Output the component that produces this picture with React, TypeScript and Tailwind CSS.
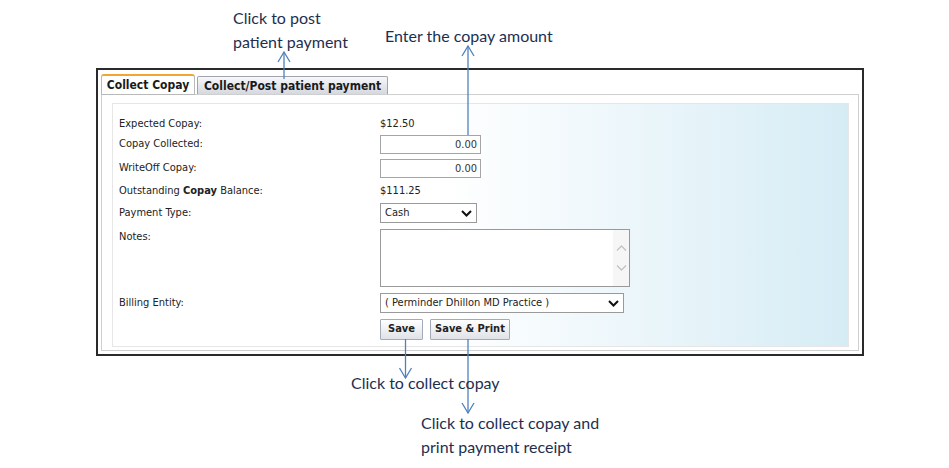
import React from "react";

const ui = "font-['DejaVu_Sans_Condensed','DejaVu_Sans',sans-serif]";
const note = "font-['Lato',sans-serif] text-[16px] leading-[24px] text-[#1d2f50]";

function Chevron({ className = "" }: { className?: string }) {
  return (
    <svg width="11" height="7" viewBox="0 0 11 7" className={className}>
      <polyline points="1,1 5.5,5.5 10,1" fill="none" stroke="#111" strokeWidth="2" />
    </svg>
  );
}

function Row({
  label,
  className = "",
  children,
}: {
  label: React.ReactNode;
  className?: string;
  children?: React.ReactNode;
}) {
  return (
    <div className={`flex ${className}`}>
      <div className="w-[261px] shrink-0">{label}</div>
      <div className="flex">{children}</div>
    </div>
  );
}

function AmountInput() {
  return (
    <div className="w-[101px] h-[19px] border border-[#a5a5a5] bg-white text-right pr-[3px] leading-[17px] text-[#333]">
      0.00
    </div>
  );
}

function Select({ value, width }: { value: string; width: string }) {
  return (
    <div
      className={`${width} h-[20px] border border-[#9a9a9a] bg-white flex items-center justify-between pl-[4px] pr-[4px]`}
    >
      <span>{value}</span>
      <Chevron />
    </div>
  );
}

function Button({ children, width }: { children: React.ReactNode; width: string }) {
  return (
    <button
      className={`${width} h-[21px] border border-[#a3abb8] bg-linear-to-b from-white to-[#dfe2e7] font-bold text-[#222] rounded-[1px]`}
    >
      {children}
    </button>
  );
}

export default function App() {
  return (
    <div className="relative w-[949px] h-[468px] bg-white overflow-hidden">
      {/* Form */}
      <div className="pt-[68px] pl-[96px]">
        <div className={`w-[768px] h-[288px] border-2 border-[#2a2a2a] pt-[4px] px-[3px] text-[11px] text-[#222] ${ui}`}>
          {/* Tabs */}
          <div className="flex items-end gap-[2px] pl-0">
            <div className="relative z-10 -mb-px w-[94px] h-[21px] bg-white border border-[#b9b9b9] border-t-2 border-t-[#f2a531] rounded-t-[3px] flex items-center justify-center text-[12px] font-bold text-[#1a1a1a]">
              Collect Copay
            </div>
            <div className="w-[191px] h-[18px] bg-linear-to-b from-[#f8f8fa] to-[#d5d8e0] border border-[#a2a4ad] border-b-0 rounded-t-[2px] flex items-center justify-center text-[12px] font-bold text-[#1a1a1a]">
              Collect/Post patient payment
            </div>
          </div>

          {/* Panel */}
          <div className="h-[257px] border border-[#cfcfcf] pt-[8px] pl-[10px] pr-[9px]">
            <div className="h-[244px] border border-[#e6e6e6] bg-linear-to-r from-white from-45% to-[#d6ecf5] pl-[6px] pt-[13px]">
              <Row label="Expected Copay:" className="h-[14px] items-center">
                $12.50
              </Row>
              <Row label="Copay Collected:" className="mt-[4px] items-center">
                <AmountInput />
              </Row>
              <Row label="WriteOff Copay:" className="mt-[5px] items-center">
                <AmountInput />
              </Row>
              <Row
                label={
                  <>
                    Outstanding <b>Copay</b> Balance:
                  </>
                }
                className="mt-[6px] h-[14px] items-center"
              >
                $111.25
              </Row>
              <Row label="Payment Type:" className="mt-[5px] items-center">
                <Select value="Cash" width="w-[97px]" />
              </Row>
              <Row label="Notes:" className="mt-[6px] items-start">
                <div className="w-[250px] h-[58px] border border-[#999] bg-white flex justify-end">
                  <div className="w-[16px] bg-[#f6f6f6] flex flex-col items-center justify-center gap-[14px]">
                    <svg width="11" height="6" viewBox="0 0 11 6">
                      <polyline points="1,5.5 5.5,1 10,5.5" fill="none" stroke="#c3c3c3" strokeWidth="1.3" />
                    </svg>
                    <svg width="11" height="6" viewBox="0 0 11 6">
                      <polyline points="1,0.5 5.5,5 10,0.5" fill="none" stroke="#c3c3c3" strokeWidth="1.3" />
                    </svg>
                  </div>
                </div>
              </Row>
              <Row label="Billing Entity:" className="mt-[6px] items-center">
                <Select value="( Perminder Dhillon MD Practice )" width="w-[244px]" />
              </Row>
              <Row label="" className="mt-[6px]">
                <div className="flex gap-[7px]">
                  <Button width="w-[43px]">Save</Button>
                  <Button width="w-[80px]">Save &amp; Print</Button>
                </div>
              </Row>
            </div>
          </div>
        </div>
      </div>

      {/* Arrows */}
      <svg className="absolute inset-0 pointer-events-none" width="949" height="468">
        <g stroke="#4f81bd" strokeWidth="1.3" fill="none">
          <line x1="284" y1="52" x2="284" y2="79" />
          <polyline points="278,62 284,52 290,62" />
          <line x1="468" y1="46" x2="468" y2="135" />
          <polyline points="462,56 468,46 474,56" />
          <line x1="405.5" y1="339" x2="405.5" y2="378" />
          <polyline points="399.5,368 405.5,378 411.5,368" />
          <line x1="468" y1="339" x2="468" y2="413" />
          <polyline points="462,403 468,413 474,403" />
        </g>
      </svg>

      {/* Callouts */}
      <div className={`absolute left-[233px] top-[6px] ${note}`}>
        <div>Click to post</div>
        <div>patient payment</div>
      </div>
      <div className={`absolute left-[385px] top-[24px] ${note}`}>Enter the copay amount</div>
      <div className={`absolute left-[351px] top-[371px] ${note}`}>Click to collect copay</div>
      <div className={`absolute left-[421px] top-[411px] ${note}`}>
        <div>Click to collect copay and</div>
        <div>print payment receipt</div>
      </div>
    </div>
  );
}
